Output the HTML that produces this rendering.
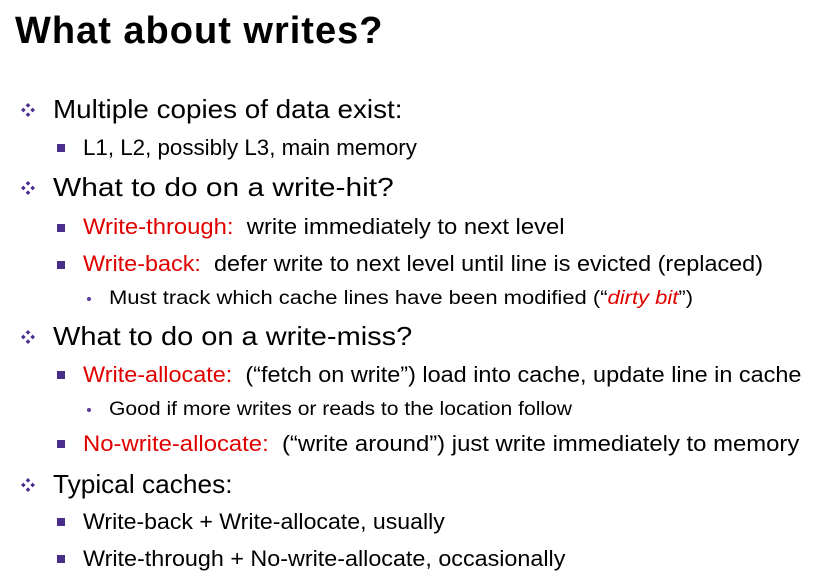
<!DOCTYPE html>
<html><head><meta charset="utf-8"><style>
body{margin:0;width:827px;height:584px;background:#fff;position:relative;overflow:hidden;font-family:"Liberation Sans",sans-serif;color:#000}
.t{position:absolute;white-space:nowrap;transform-origin:0 50%}
.r{color:#e00000}
.l1{font-size:26px;line-height:26px}
.l2{font-size:22px;line-height:22px}
.l3{font-size:19px;line-height:19px}
.sq{position:absolute;width:8px;height:8px;background:#4b2d8c}
.dot{position:absolute;width:4px;height:4px;border-radius:50%;background:#5a3a9a}
.dm{position:absolute;width:14px;height:14px}
</style></head><body>
<div class="t" style="left:15px;top:12px;font-size:38px;line-height:38px;font-weight:bold;letter-spacing:1px">What about writes?</div>

<svg class="dm" style="left:21px;top:103px" viewBox="0 0 12 12"><g fill="#4b2d8c"><path d="M6 0l2 2-2 2-2-2z"/><path d="M6 8l2 2-2 2-2-2z"/><path d="M0 6l2-2 2 2-2 2z"/><path d="M8 6l2-2 2 2-2 2z"/></g></svg>
<div class="t l1" style="left:53px;top:96px;transform:scaleX(1.07)">Multiple copies of data exist:</div>
<div class="sq" style="left:57px;top:144px"></div>
<div class="t l2" style="left:83px;top:137px;transform:scaleX(1.015)">L1, L2, possibly L3, main memory</div>

<svg class="dm" style="left:21px;top:181px" viewBox="0 0 12 12"><g fill="#4b2d8c"><path d="M6 0l2 2-2 2-2-2z"/><path d="M6 8l2 2-2 2-2-2z"/><path d="M0 6l2-2 2 2-2 2z"/><path d="M8 6l2-2 2 2-2 2z"/></g></svg>
<div class="t l1" style="left:53px;top:174px;transform:scaleX(1.15)">What to do on a write-hit?</div>
<div class="sq" style="left:57px;top:224px"></div>
<div class="t l2" style="left:83px;top:216px;transform:scaleX(1.083)"><span class="r">Write-through:</span>&nbsp; write immediately to next level</div>
<div class="sq" style="left:57px;top:261px"></div>
<div class="t l2" style="left:83px;top:253px;transform:scaleX(1.064)"><span class="r">Write-back:</span>&nbsp; defer write to next level until line is evicted (replaced)</div>
<div class="dot" style="left:87px;top:297px"></div>
<div class="t l3" style="left:109px;top:289px;transform:scaleX(1.157)">Must track which cache lines have been modified (“<i class="r">dirty bit</i>”)</div>

<svg class="dm" style="left:21px;top:330px" viewBox="0 0 12 12"><g fill="#4b2d8c"><path d="M6 0l2 2-2 2-2-2z"/><path d="M6 8l2 2-2 2-2-2z"/><path d="M0 6l2-2 2 2-2 2z"/><path d="M8 6l2-2 2 2-2 2z"/></g></svg>
<div class="t l1" style="left:53px;top:323px;transform:scaleX(1.115)">What to do on a write-miss?</div>
<div class="sq" style="left:57px;top:371px"></div>
<div class="t l2" style="left:83px;top:364px;transform:scaleX(1.065)"><span class="r">Write-allocate:</span>&nbsp; (“fetch on write”) load into cache, update line in cache</div>
<div class="dot" style="left:87px;top:408px"></div>
<div class="t l3" style="left:109px;top:400px;transform:scaleX(1.11)">Good if more writes or reads to the location follow</div>
<div class="sq" style="left:57px;top:440px"></div>
<div class="t l2" style="left:83px;top:433px;transform:scaleX(1.085)"><span class="r">No-write-allocate:</span>&nbsp; (“write around”) just write immediately to memory</div>

<svg class="dm" style="left:21px;top:478px" viewBox="0 0 12 12"><g fill="#4b2d8c"><path d="M6 0l2 2-2 2-2-2z"/><path d="M6 8l2 2-2 2-2-2z"/><path d="M0 6l2-2 2 2-2 2z"/><path d="M8 6l2-2 2 2-2 2z"/></g></svg>
<div class="t l1" style="left:53px;top:471px;transform:scaleX(1.01)">Typical caches:</div>
<div class="sq" style="left:57px;top:518px"></div>
<div class="t l2" style="left:83px;top:511px;transform:scaleX(1.05)">Write-back + Write-allocate, usually</div>
<div class="sq" style="left:57px;top:555px"></div>
<div class="t l2" style="left:83px;top:548px;transform:scaleX(1.06)">Write-through + No-write-allocate, occasionally</div>
</body></html>
